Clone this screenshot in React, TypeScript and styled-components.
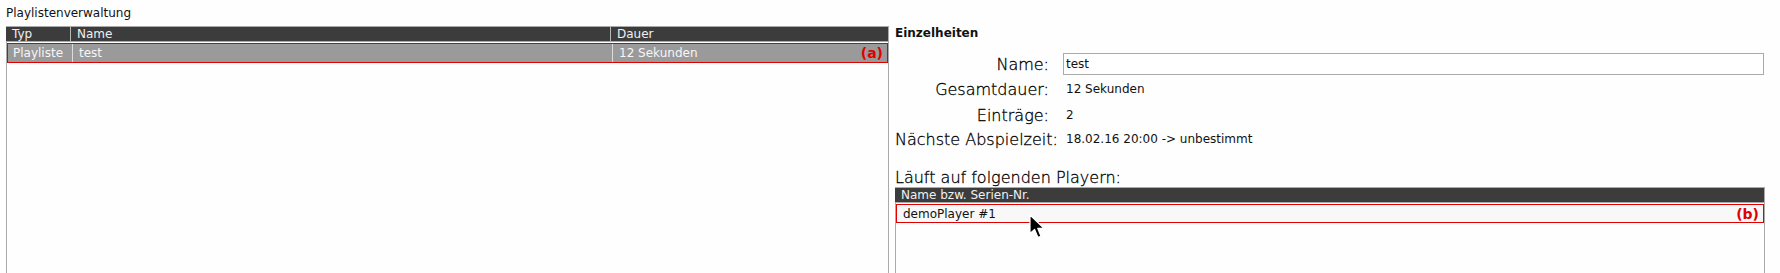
import React from "react";
import styled, { createGlobalStyle } from "styled-components";

const Global = createGlobalStyle`
  html, body { margin: 0; padding: 0; background: #fefefe; overflow: hidden; }
  body { font-family: "DejaVu Sans", "Liberation Sans", sans-serif; color: #111; }
`;

const Page = styled.div`
  padding: 6px 15px 0 6px;
  height: 273px;
  box-sizing: border-box;
  display: flex;
  flex-direction: column;
`;

const Title = styled.div`
  font-size: 12px;
  line-height: 15px;
  margin-bottom: 5px;
`;

const Columns = styled.div`
  display: flex;
  gap: 6px;
  flex: 1;
  min-height: 0;
`;

const Table = styled.div<{ $width: number }>`
  width: ${(p) => p.$width}px;
  box-sizing: border-box;
  border-left: 1px solid #aaa;
  border-right: 1px solid #aaa;
  display: flex;
  flex-direction: column;
  flex: 1;
`;

const HeaderRow = styled.div<{ $cols: string }>`
  display: grid;
  grid-template-columns: ${(p) => p.$cols};
  background: #3c3c3c;
  border-top: 1px solid #aaa;
  border-bottom: 1px solid #aaa;
  color: #f0f0f0;
  font-size: 12px;
  line-height: 14px;
  height: 14px;
  margin-left: -1px;
`;

const HeaderCell = styled.div<{ $sep?: boolean }>`
  padding-left: 6px;
  border-left: ${(p) => (p.$sep ? "1px solid #b8b8b8" : "none")};
  white-space: nowrap;
  overflow: hidden;
`;

const DataRow = styled.div<{ $cols: string; $bg: string; $fg: string; $h: number }>`
  position: relative;
  display: grid;
  grid-template-columns: ${(p) => p.$cols};
  background: ${(p) => p.$bg};
  color: ${(p) => p.$fg};
  border: 1px solid #e00000;
  margin-top: 1px;
  height: ${(p) => p.$h}px;
  font-size: 12px;
  align-items: center;
  box-sizing: border-box;
`;

const DataCell = styled.div<{ $sep?: boolean; $pad?: number }>`
  padding-left: ${(p) => p.$pad ?? 6}px;
  align-self: stretch;
  display: flex;
  align-items: center;
  border-left: ${(p) => (p.$sep ? "1px solid #dcdcdc" : "none")};
  white-space: nowrap;
`;

const Marker = styled.span`
  position: absolute;
  right: 4px;
  top: 50%;
  transform: translateY(-50%);
  color: #e00000;
  font-weight: bold;
  font-size: 14px;
  line-height: 16px;
`;

const Details = styled.div`
  width: 870px;
  display: flex;
  flex-direction: column;
`;

const SectionTitle = styled.div`
  font-size: 12px;
  font-weight: bold;
  line-height: 15px;
`;

const Form = styled.div`
  display: grid;
  grid-template-columns: 154px 1fr;
  grid-template-rows: 22px 28px 24px 24px;
  column-gap: 14px;
  align-items: center;
  margin-top: 12px;
  margin-right: 1px;
`;

const Label = styled.div`
  font-size: 16px;
  font-weight: 200;
  text-align: right;
  line-height: 19px;
  white-space: nowrap;
  color: #000;
  -webkit-text-stroke: 0.3px #000;
`;

const Value = styled.div`
  font-size: 12px;
  padding-left: 3px;
  line-height: 15px;
  white-space: nowrap;
`;

const Input = styled.div`
  height: 22px;
  box-sizing: border-box;
  border: 1px solid #aaa;
  background: #fff;
  font-size: 12px;
  line-height: 20px;
  padding-left: 2px;
`;

const SubTitle = styled.div`
  font-size: 16px;
  font-weight: 200;
  line-height: 19px;
  margin-top: 17px;
  color: #000;
  -webkit-text-stroke: 0.3px #000;
`;

const CursorBox = styled.div`
  position: absolute;
  left: 132px;
  top: 9px;
  width: 18px;
  height: 26px;
  pointer-events: none;
  z-index: 2;
`;

function Cursor() {
  return (
    <CursorBox>
      <svg width="18" height="26" viewBox="0 0 18 26">
        <path
          d="M1 1 L1 19.5 L5.6 15.4 L9 23.4 L12 22.2 L8.8 14.4 L15 14.4 Z"
          fill="#000"
          stroke="#fff"
          strokeWidth="1.2"
          strokeLinejoin="round"
        />
      </svg>
    </CursorBox>
  );
}

const LEFT_COLS = "64px 540px 1fr";
const RIGHT_COLS = "1fr";

export default function App() {
  return (
    <>
      <Global />
      <Page>
        <Title>Playlistenverwaltung</Title>
        <Columns>
          <Table $width={883}>
            <HeaderRow $cols={LEFT_COLS}>
              <HeaderCell>Typ</HeaderCell>
              <HeaderCell $sep>Name</HeaderCell>
              <HeaderCell $sep>Dauer</HeaderCell>
            </HeaderRow>
            <DataRow $cols={LEFT_COLS} $bg="#9a9a9a" $fg="#f6f6f6" $h={20}>
              <DataCell $pad={5}>Playliste</DataCell>
              <DataCell $sep>test</DataCell>
              <DataCell $sep>12 Sekunden</DataCell>
              <Marker>(a)</Marker>
            </DataRow>
          </Table>
          <Details>
            <SectionTitle>Einzelheiten</SectionTitle>
            <Form>
              <Label>Name:</Label>
              <Input>test</Input>
              <Label>Gesamtdauer:</Label>
              <Value>12 Sekunden</Value>
              <Label>Einträge:</Label>
              <Value>2</Value>
              <Label>Nächste Abspielzeit:</Label>
              <Value>18.02.16 20:00 -&gt; unbestimmt</Value>
            </Form>
            <SubTitle>Läuft auf folgenden Playern:</SubTitle>
            <Table $width={870}>
              <HeaderRow $cols={RIGHT_COLS}>
                <HeaderCell>Name bzw. Serien-Nr.</HeaderCell>
              </HeaderRow>
              <DataRow $cols={RIGHT_COLS} $bg="#f8f8f8" $fg="#111" $h={19}>
                <DataCell>demoPlayer #1</DataCell>
                <Marker>(b)</Marker>
                <Cursor />
              </DataRow>
            </Table>
          </Details>
        </Columns>
      </Page>
    </>
  );
}
